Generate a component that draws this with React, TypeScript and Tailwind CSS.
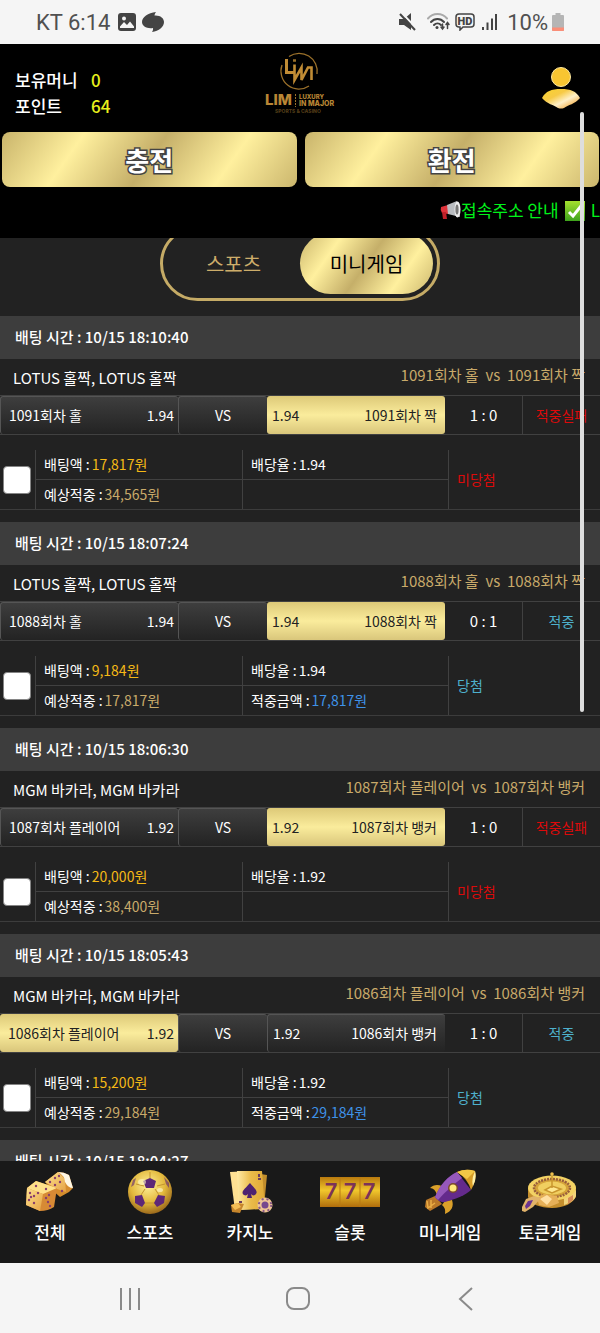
import React from "react";

type Bet = {
  time: string;
  game: string;
  home: string;
  away: string;
  odds: string;
  pick: "home" | "away";
  score: string;
  stake: string;
  expected: string;
  payout?: string;
};

const BETS: Bet[] = [
  { time: "10/15 18:10:40", game: "LOTUS 홀짝, LOTUS 홀짝", home: "1091회차 홀", away: "1091회차 짝", odds: "1.94", pick: "away", score: "1 : 0", stake: "17,817원", expected: "34,565원" },
  { time: "10/15 18:07:24", game: "LOTUS 홀짝, LOTUS 홀짝", home: "1088회차 홀", away: "1088회차 짝", odds: "1.94", pick: "away", score: "0 : 1", stake: "9,184원", expected: "17,817원", payout: "17,817원" },
  { time: "10/15 18:06:30", game: "MGM 바카라, MGM 바카라", home: "1087회차 플레이어", away: "1087회차 뱅커", odds: "1.92", pick: "away", score: "1 : 0", stake: "20,000원", expected: "38,400원" },
  { time: "10/15 18:05:43", game: "MGM 바카라, MGM 바카라", home: "1086회차 플레이어", away: "1086회차 뱅커", odds: "1.92", pick: "home", score: "1 : 0", stake: "15,200원", expected: "29,184원", payout: "29,184원" },
];

const GOLD = "bg-[linear-gradient(125deg,#c9b46b_0%,#fff09e_25%,#c5af69_50%,#fff09e_75%,#cbb66d_100%)]";

const StatusBar: React.FC = () => (
  <div className="flex h-11 shrink-0 items-center justify-between bg-[#f5f5f5] pl-9 pr-9 font-['Roboto',sans-serif] text-[22px] text-[#505050]">
    <div className="flex items-center gap-2">
      <span>KT 6:14</span>
      <svg width="18" height="18" viewBox="0 0 18 18" aria-hidden>
        <rect width="18" height="18" rx="3" fill="#444" />
        <path d="M2 13.500 6 9l3 3 3-3.500 4 5V15H2z" fill="#f5f5f5" />
        <circle cx="6" cy="5.500" r="2" fill="#f5f5f5" />
      </svg>
      <svg className="-ml-0.5" width="22" height="20" viewBox="0 0 22 20" aria-hidden>
        <path d="M14 0c-1 1.500-1.500 2.500-1.500 3.500C18 3 22 6 22 10c0 5-5 9-12 10 1-1.500 1.200-2.500 1-4C5 17 0 14 0 10 0 5 6 1 14 0z" fill="#444" />
      </svg>
    </div>
    <div className="flex items-center gap-1">
      <svg width="18" height="18" viewBox="0 0 18 18" aria-hidden>
        <path d="M0 6h5l7-6v17l-7-5H0z" fill="#444" />
        <path d="M3 0l15 16" stroke="#f5f5f5" strokeWidth="2" />
        <path d="M1 1l15 16" stroke="#444" strokeWidth="2" />
      </svg>
      <svg className="ml-1.5" width="24" height="18" viewBox="0 0 24 18" fill="none" strokeLinecap="round" aria-hidden>
        <path d="M1 5.500C6-.5 15-.5 20 5.500" stroke="#aaa" strokeWidth="2" />
        <path d="M4 9c3.500-4 9.500-4 13 0M7 12c2-2 5-2 7 0" stroke="#444" strokeWidth="2" />
        <circle cx="10" cy="14.500" r="1.500" fill="#444" />
        <path d="M15.500 11v5m-1.500-2 1.500 2 1.500-2M20.500 15.500v-6m-1.500 2 1.500-2 1.500 2" stroke="#444" strokeWidth="1.500" />
      </svg>
      <svg width="20" height="18" viewBox="0 0 20 18" aria-hidden>
        <path d="M4 1h12q3 0 3 3v7q0 3-3 3h-8l-3 3v-3H4q-3 0-3-3V4q0-3 3-3z" fill="none" stroke="#444" strokeWidth="1.500" />
        <text x="10" y="11.500" textAnchor="middle" fontSize="11" fontWeight="900" fill="#444">HD</text>
      </svg>
      <svg className="ml-0.5" width="18" height="18" viewBox="0 0 18 18" fill="#444" aria-hidden>
        <path d="M1 14h2v3H1zM5.500 9.500h2V17h-2zM10 5.500h2V17h-2zM14 1h2v16h-2z" />
      </svg>
      <span className="ml-1">10%</span>
      <svg width="12" height="18" viewBox="0 0 12 18" aria-hidden>
        <path d="M3.500 0h5v2H11q1 0 1 1v14q0 1-1 1H1q-1 0-1-1V3q0-1 1-1h2.500z" fill="#b5b5b5" />
        <path d="M0 14.500h12V17q0 1-1 1H1q-1 0-1-1z" fill="#fa8e78" />
      </svg>
    </div>
  </div>
);

const Logo: React.FC = () => (
  <svg width="72" height="66" viewBox="0 0 72 66" fill="none" aria-label="LIM" role="img">
    <g stroke="#9a702a">
      <path d="M25 8.500A18 18 0 0 1 53 26M18 17A18 18 0 0 0 45 38" strokeWidth="1.300" />
      <path d="M22.500 11v13.500H30" stroke="#c08c35" strokeWidth="3" />
      <path d="M30.500 16.500V32l7-12.500V32l6.500-12.500h3.500V32" stroke="#c08c35" strokeWidth="2.600" />
      <path d="M29 12.500h3" strokeWidth="2.500" />
      <path d="M31.500 46v13" strokeWidth="1" strokeDasharray="2 1" />
    </g>
    <g fill="#b98635" fontFamily="Inter, sans-serif" fontWeight="800">
      <text x="1" y="57" fontSize="15">LIM</text>
      <text x="35" y="50.500" fontSize="6">LUXURY</text>
      <text x="35" y="58" fontSize="7">IN MAJOR</text>
      <text x="11" y="65" fontSize="5" fillOpacity="0.450">SPORTS &amp; CASINO</text>
    </g>
  </svg>
);

const UserIcon: React.FC = () => (
  <svg width="38" height="42" viewBox="0 0 38 42" aria-hidden>
    <defs>
      <linearGradient id="user" x1="0" y1="0" x2="1" y2="1">
        <stop offset="0" stopColor="#f9d32c" />
        <stop offset="0.350" stopColor="#f7ca45" />
        <stop offset="0.600" stopColor="#fff0c8" />
        <stop offset="0.850" stopColor="#f2b04c" />
      </linearGradient>
    </defs>
    <circle cx="19" cy="10" r="9.500" fill="#f8c531" stroke="#ffe9a0" />
    <path d="M0 31c4-7 9-9 19-9s15 2 19 9c-5 6-12 7-16 10q-3 1-6 0C12 38 5 37 0 31z" fill="url(#user)" />
  </svg>
);

const Header: React.FC = () => (
  <header className="shrink-0 bg-black text-white">
    <div className="flex h-22 items-start justify-between pl-[15px] pr-5">
      <dl className="mt-[23px] grid flex-1 grid-cols-[76px_1fr] text-[17px] leading-[26px] font-medium">
        <dt>보유머니</dt>
        <dd className="text-[#e8f01c]">0</dd>
        <dt>포인트</dt>
        <dd className="text-[#e8f01c]">64</dd>
      </dl>
      <a href="#home" className="mt-1 ml-1">
        <Logo />
      </a>
      <div className="mt-[23px] flex flex-1 justify-end">
        <button type="button" aria-label="내 정보">
          <UserIcon />
        </button>
      </div>
    </div>
    <div className="grid grid-cols-2 gap-2 pl-0.5 pr-px">
      {["충전", "환전"].map((label) => (
        <button
          key={label}
          type="button"
          className={`${GOLD} h-[55px] rounded-lg text-[26px] font-bold [-webkit-text-stroke:3px_#444] [paint-order:stroke_fill]`}
        >
          {label}
        </button>
      ))}
    </div>
    <div className="flex h-[51px] items-start overflow-hidden pl-[440px] pt-2.5 text-[17px] leading-[26px] whitespace-nowrap text-[#00f31a]">
      <svg className="mt-1 shrink-0" width="21" height="20" viewBox="0 0 21 20" aria-hidden>
        <path d="M1 6 8 4v9l-6-1q-2-3-1-6z" fill="#e0323a" />
        <path d="M2 11h4l1 7H3z" fill="#c02029" />
        <path d="M7 4 17 0l3 16-12-3z" fill="#b9bcc0" />
        <ellipse cx="17.500" cy="8.500" rx="3" ry="8" fill="#eee" />
        <ellipse cx="17" cy="8.500" rx="1.600" ry="5" fill="#777" />
      </svg>
      <span>접속주소 안내</span>
      <svg className="mx-1.5 mt-1 shrink-0" width="20" height="20" viewBox="0 0 20 20" aria-hidden>
        <defs>
          <linearGradient id="check" x1="0" y1="0" x2="0" y2="1">
            <stop offset="0" stopColor="#a5e02f" />
            <stop offset="1" stopColor="#3ea31c" />
          </linearGradient>
        </defs>
        <rect width="20" height="20" fill="url(#check)" />
        <path d="m4 11 4 4 8-10" fill="none" stroke="#fff" strokeWidth="3" />
      </svg>
      <span>LIM</span>
    </div>
  </header>
);

const Tabs: React.FC = () => (
  <div className="mx-auto -mt-3 flex h-[75px] w-[280px] rounded-full border-3 border-[#c5ab66] p-1 text-[20px]">
    <button type="button" className="flex-1 rounded-full text-[#cdad6a]">
      스포츠
    </button>
    <button type="button" className={`${GOLD} flex-1 rounded-full text-black`}>
      미니게임
    </button>
  </div>
);

const BetTime: React.FC<{ time: string }> = ({ time }) => (
  <h2 className="flex h-[43px] items-center bg-[#3d3d3d] pl-[15px] text-[15px] font-medium">배팅 시간 : {time}</h2>
);

const Side: React.FC<{ active: boolean; left: string; right: string; className: string }> = ({ active, left, right, className }) => (
  <button
    type="button"
    className={`flex h-[38px] items-center justify-between rounded-[3px] whitespace-nowrap ${className} ${
      active
        ? "bg-[linear-gradient(#ddc978,#faec9c_50%,#d9c67b)] text-[#222]"
        : "border-l border-t border-[#555] bg-linear-to-b from-[#3e3e3e] to-[#232323]"
    }`}
  >
    <span>{left}</span>
    <span>{right}</span>
  </button>
);

const BetCard: React.FC<{ bet: Bet }> = ({ bet }) => {
  const won = Boolean(bet.payout);
  const tone = won ? "text-[#4eb0cc]" : "text-[#dc0a0a]";

  return (
    <article className="mb-3 text-[14px]">
      <BetTime time={bet.time} />
      <div className="flex h-9 items-start justify-between pl-[13px] pr-[15px] text-[15px]">
        <span className="pt-2">{bet.game}</span>
        <span className="pt-[5px] text-[#c9aa6a]">
          {bet.home}&nbsp; vs &nbsp;{bet.away}
        </span>
      </div>
      <div className="grid h-10 grid-cols-[178fr_89fr_178fr_77fr_78fr] border-y border-[#414141]">
        <Side active={bet.pick === "home"} left={bet.home} right={bet.odds} className="pl-2 pr-1" />
        <div className="flex items-center justify-center rounded-[3px] border-l border-t border-[#555] bg-linear-to-b from-[#3e3e3e] to-[#232323]">VS</div>
        <Side active={bet.pick === "away"} left={bet.odds} right={bet.away} className="pl-[5px] pr-2" />
        <div className="flex items-center justify-center text-[15px]">{bet.score}</div>
        <div className={`flex items-center justify-center border-l border-[#414141] ${tone}`}>{won ? "적중" : "적중실패"}</div>
      </div>
      <div className="mt-[15px] grid grid-cols-[35px_207fr_206fr_152fr] border-b border-[#3c3c3c]">
        <label className="flex items-center pl-[3px]">
          <input
            type="checkbox"
            aria-label={`${bet.time} 선택`}
            className="size-7 appearance-none rounded-[4px] border border-[#858585] bg-white"
          />
        </label>
        <div className="border-l border-[#414141] leading-[29px]">
          <p className="flex gap-0.5 border-b border-[#414141] pl-2">
            배팅액 : <span className="text-[#f5b916]">{bet.stake}</span>
          </p>
          <p className="flex gap-0.5 pl-2">
            예상적중 : <span className="text-[#c9aa6a]">{bet.expected}</span>
          </p>
        </div>
        <div className="border-l border-[#414141] leading-[29px]">
          <p className="flex gap-0.5 border-b border-[#414141] pl-2">
            배당율 : <span>{bet.odds}</span>
          </p>
          {bet.payout && (
            <p className="flex gap-0.5 pl-2">
              적중금액 : <span className="text-[#3f92e8]">{bet.payout}</span>
            </p>
          )}
        </div>
        <div className={`flex items-center border-l border-[#414141] pl-2 ${tone}`}>{won ? "당첨" : "미당첨"}</div>
      </div>
    </article>
  );
};

const DICE_PIPS = [
  [10, 17], [20, 20], [4, 24], [8, 27], [12, 24], [3, 31], [8, 34], [5, 28],
  [20, 29], [22, 33], [24, 37], [23, 26], [29, 9], [24, 13], [33, 7], [34, 13], [29, 16], [36, 22],
];

const DiceIcon = () => (
  <>
    <defs>
      <linearGradient id="die" x1="0" y1="0" x2="1" y2="1">
        <stop offset="0" stopColor="#ffe390" />
        <stop offset="1" stopColor="#e5a244" />
      </linearGradient>
    </defs>
    <path d="m19 13 13-10q6 0 11 3l4 13-4 4-9 5-9-8z" fill="#d58c2d" />
    <path d="m19 13 13-10 7 7 1 13-9-3z" fill="url(#die)" />
    <path d="M32 3q6 0 11 3l4 13q-5 0-8-6 0-6-7-10z" fill="#fff7e4" />
    <path d="M1 19 10 12l21 7-3 19q-6 4-14 4L0 36z" fill="#d78a35" />
    <path d="M1 19 10 12l21 7-14 6z" fill="#ffe18a" />
    <path d="m1 19 16 6-3 17L0 36z" fill="url(#die)" />
    <g fill="#8a3f6c">
      {DICE_PIPS.map(([x, y]) => (
        <circle key={`${x}-${y}`} cx={x} cy={y} r="1.200" />
      ))}
    </g>
  </>
);

const BallIcon = () => (
  <>
    <defs>
      <radialGradient id="ball" cx="0.450" cy="0.350" r="0.650">
        <stop offset="0" stopColor="#fff09a" />
        <stop offset="0.600" stopColor="#e3b93c" />
        <stop offset="1" stopColor="#9c6a1c" />
      </radialGradient>
    </defs>
    <circle cx="24" cy="23" r="22" fill="url(#ball)" />
    <path d="M24 9V3M31 17l8-2M18 17l-8-2M19 20l-4 6M29 20l4 6M19 34h10" stroke="#c39430" />
    <g fill="#5d2777">
      <path d="m24 9 6 3-2 7h-8l-3-7z" />
      <path d="m9 27 7-1 3 8-3 4-7-4z" />
      <path d="m39 27-7-1-4 8 3 4 7-4z" />
      <path d="m5 18 2-7 3-2-2 7zM38 8l5 6v5l-3-4z" opacity="0.600" />
    </g>
    <ellipse cx="16" cy="13" rx="4" ry="3" fill="#fff8c8" opacity="0.600" />
    <ellipse cx="34" cy="21" rx="3" ry="2" fill="#fffbd8" opacity="0.600" />
  </>
);

const CardsIcon = () => (
  <>
    <defs>
      <linearGradient id="card" x1="0" y1="0" x2="1" y2="0">
        <stop offset="0" stopColor="#ffeaa5" />
        <stop offset="0.500" stopColor="#eabb4a" />
        <stop offset="1" stopColor="#e0a936" />
      </linearGradient>
    </defs>
    <path d="m28 4 13 2-3 32-12 2z" fill="#c18d2c" />
    <path d="m4 3 20-1 4 38-19 1z" fill="#ffe193" />
    <path d="m11 2 25 0 3 38-26 1z" fill="url(#card)" />
    <path d="M24 14c5 6 9 9 5 12-2 1-3 0-4-1l1 4h-5l1-4c-1 1-2 2-4 1-4-3 1-6 6-12z" fill="#4e2370" />
    <path d="m5 36 7-2 6 1-4 9-8-1z" fill="#c7862c" />
    <path d="m5 36 7-2 3 4-6 3z" fill="#f3bd55" />
    <circle cx="39" cy="36" r="7.500" fill="#eec595" />
    <circle cx="39" cy="36" r="6.200" fill="none" stroke="#8a5a86" strokeWidth="2" strokeDasharray="2 3" />
    <circle cx="39" cy="36" r="3.500" fill="#76488e" />
    <path d="M32 5h2v3h-2zM32 9h3v2h-3zM13 32h3v2h-3z" fill="#6b3d5e" />
  </>
);

const SlotIcon = () => (
  <>
    <defs>
      <linearGradient id="slot" x1="0" y1="0" x2="0" y2="1">
        <stop offset="0" stopColor="#b8790e" />
        <stop offset="0.450" stopColor="#f1c62c" />
        <stop offset="1" stopColor="#b06d0c" />
      </linearGradient>
    </defs>
    <rect y="8" width="60" height="30" fill="url(#slot)" />
    <path d="M20 8v30M40 8v30" stroke="#b97a14" />
    <g fill="#7b3358" fontFamily="Inter, sans-serif" fontWeight="600" fontSize="22" textAnchor="middle">
      <text x="11" y="30">7</text>
      <text x="30" y="30">7</text>
      <text x="49" y="30">7</text>
    </g>
  </>
);

const RocketIcon = () => (
  <>
    <path d="M18 17c-5-2-9-1-12 2q5 0 7 7l4-3zM28 31c2 6 0 11-7 14q1-6-3-9l3-4z" fill="#dba02a" />
    <path d="m11 27-9 4-1 7 5 4 7-4 5-3z" fill="#b97728" />
    <path d="m3 32 1 7 7-5M7 31l0 8" fill="none" stroke="#e9ad45" strokeWidth="1.500" />
    <path d="M33 3C24 7 16 16 11 28q4 6 10 5C32 30 42 26 47 21z" fill="#642a8c" />
    <path d="M33 3C24 7 16 16 11 28l3 3C22 22 30 15 38 9z" fill="#9658ba" />
    <path d="M33 3q9-4 18-1 2 9-4 19-3-11-14-18z" fill="#d79c27" />
    <path d="M33 3q9-4 18-1l-8 8z" fill="#f3c846" />
    <path d="M51 2q2 8-2 15-2-6 2-15z" fill="#fff0a6" />
    <circle cx="29" cy="19" r="5" fill="#7c4a2a" />
    <circle cx="29" cy="19" r="3.500" fill="#ffe77b" />
  </>
);

const RouletteIcon = () => (
  <>
    <path d="M8 19v9c2 7 12 11 24 11s22-5 24-12v-8z" fill="#c48e2d" />
    <path d="M44 36c6-2 11-5 12-9v-6l-12 7z" fill="#f2d37b" />
    <ellipse cx="32" cy="19" rx="24" ry="12.500" fill="#f3d264" />
    <ellipse cx="32" cy="19" rx="18" ry="9" fill="#d5a339" stroke="#9a5f3c" strokeWidth="2.500" strokeDasharray="2 1" />
    <ellipse cx="32" cy="19" rx="14" ry="6.500" fill="#f0cf60" />
    <path d="M32 5v14M25 21l7-4 9 3-9 4z" stroke="#c9962e" strokeWidth="1.500" fill="#ffe890" />
    <circle cx="32" cy="5" r="1.800" fill="#edc04e" />
    <path d="m17 29 7-4 13 2 2 7-10 4-10-2z" fill="#e6b058" />
    <path d="m20 30 7-4 5 4-5 6z" fill="#ffdfa2" />
    <path d="m2 38 4-8 8-3 7 2-8 9-8 5-3-1z" fill="#e1b36b" />
    <path d="m5 37 3-5 5-1-3 6-4 3z" fill="#6a3390" />
    <path d="m48 29 5-3v5l-5 4z" fill="#d78b55" />
  </>
);

const MENU = [
  { label: "전체", width: 48, Icon: DiceIcon },
  { label: "스포츠", width: 48, Icon: BallIcon },
  { label: "카지노", width: 48, Icon: CardsIcon },
  { label: "슬롯", width: 60, Icon: SlotIcon },
  { label: "미니게임", width: 52, Icon: RocketIcon },
  { label: "토큰게임", width: 60, Icon: RouletteIcon },
];

const BottomMenu: React.FC = () => (
  <nav className="grid h-[102px] shrink-0 grid-cols-6 bg-[#191919] pt-2 text-[17px] leading-6 font-medium text-white">
    {MENU.map(({ label, width, Icon }) => (
      <a key={label} href={`#${label}`} className="flex flex-col items-center gap-1.5">
        <svg width={width} height="45" viewBox={`0 0 ${width} 45`} aria-hidden>
          <Icon />
        </svg>
        {label}
      </a>
    ))}
  </nav>
);

const SystemBar: React.FC = () => (
  <div className="grid h-[70px] shrink-0 grid-cols-[90px_1fr_1fr_1fr_90px] items-center justify-items-center bg-[#f5f5f5] pt-0.5 text-[#8a8a8a]">
    <button type="button" aria-label="최근 앱" className="col-start-2 -ml-15">
      <svg width="24" height="24" fill="none" stroke="currentColor" strokeWidth="2">
        <path d="M3 1v22M12 1v22M21 1v22" />
      </svg>
    </button>
    <button type="button" aria-label="홈" className="-ml-1">
      <svg width="26" height="24" fill="none" stroke="currentColor" strokeWidth="2">
        <rect x="2" y="1" width="22" height="21" rx="7" />
      </svg>
    </button>
    <button type="button" aria-label="뒤로" className="ml-13">
      <svg width="16" height="24" fill="none" stroke="currentColor" strokeWidth="2">
        <path d="M14 1 2 12l12 11" />
      </svg>
    </button>
  </div>
);

const App: React.FC = () => {
  return (
    <div className="relative flex h-screen flex-col overflow-hidden bg-[#222] font-['Noto_Sans_CJK_KR',sans-serif]">
      <StatusBar />
      <Header />
      <main className="min-h-0 flex-1 overflow-hidden text-white">
        <Tabs />
        <div className="mt-[15px]">
          {BETS.map((bet) => (
            <BetCard key={bet.time} bet={bet} />
          ))}
          <BetTime time="10/15 18:04:27" />
        </div>
      </main>
      <BottomMenu />
      <SystemBar />
      {/* scroll indicator */}
      <div className="absolute top-28 right-4 h-[600px] w-1 rounded-full bg-[#dedede]" />
    </div>
  );
};

export default App;
